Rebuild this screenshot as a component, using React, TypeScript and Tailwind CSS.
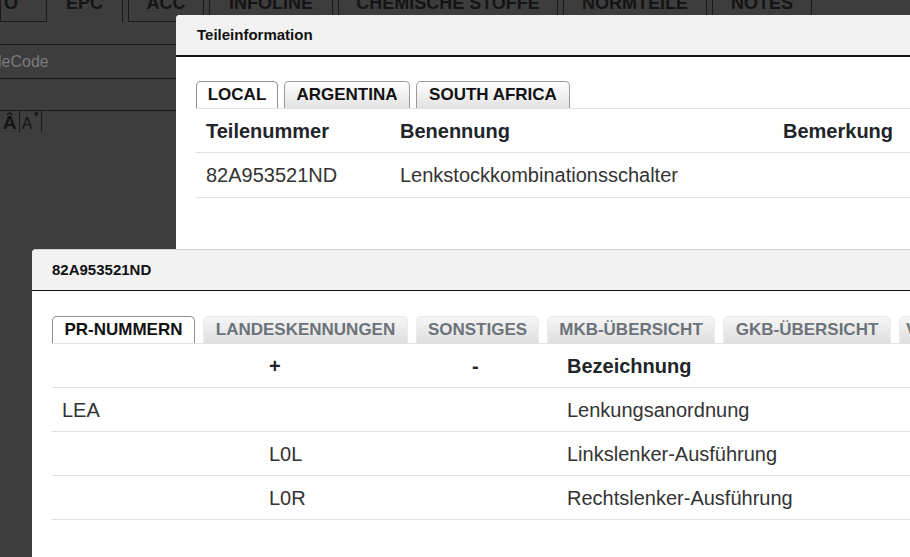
const appTabs = [
  { label: "O", width: "w-[46px] mr-0 border-r-0", align: "justify-end pr-[28px]", active: false },
  { label: "EPC", width: "w-[77px] mr-[5px]", align: "justify-center", active: true },
  { label: "ACC", width: "w-[76px] mr-[5px]", align: "justify-center", active: false },
  { label: "INFOLINE", width: "w-[124px] mr-[5px]", align: "justify-center", active: false },
  { label: "CHEMISCHE STOFFE", width: "w-[220px] mr-[5px]", align: "justify-center", active: false },
  { label: "NORMTEILE", width: "w-[144px] mr-[5px]", align: "justify-center", active: false },
  { label: "NOTES", width: "w-[100px] mr-[5px]", align: "justify-center", active: false },
];

const marketTabs = [
  { label: "LOCAL", width: "w-[82px] justify-center", active: true },
  { label: "ARGENTINA", width: "w-[126px] justify-center", active: false },
  { label: "SOUTH AFRICA", width: "w-[154px] justify-center", active: false },
];

const detailTabs = [
  { label: "PR-NUMMERN", width: "w-[143px] justify-center", active: true },
  { label: "LANDESKENNUNGEN", width: "w-[205px] justify-center", active: false },
  { label: "SONSTIGES", width: "w-[123px] justify-center", active: false },
  { label: "MKB-ÜBERSICHT", width: "w-[168px] justify-center", active: false },
  { label: "GKB-ÜBERSICHT", width: "w-[168px] justify-center", active: false },
  { label: "VERWENDUNG", width: "w-[160px] justify-start pl-[6px]", active: false },
];

const prRows = [
  { id: "lea", family: "LEA", plus: "", minus: "", name: "Lenkungsanordnung" },
  { id: "l0l", family: "", plus: "L0L", minus: "", name: "Linkslenker-Ausführung" },
  { id: "l0r", family: "", plus: "L0R", minus: "", name: "Rechtslenker-Ausführung" },
];

function AppTabBar() {
  return (
    <div className="flex h-[22px]">
      {appTabs.map((tab) => (
        <div
          key={tab.label}
          className={`flex h-[22px] shrink-0 items-start border-x border-[#1b1b1b] text-[18px] font-bold leading-none text-[#141414] ${tab.width} ${tab.align} ${tab.active ? "" : "border-b"}`}
        >
          <span className="-mt-[6px] whitespace-nowrap">{tab.label}</span>
        </div>
      ))}
    </div>
  );
}

function SidePane() {
  return (
    <div className="w-[176px]">
      <div className="h-[23px] border-b border-[#1b1b1b]"></div>
      <div className="flex h-[34px] items-center border-b border-[#1b1b1b] text-[16px] text-[#7a7a7a]">
        <span className="-ml-[2px]">leCode</span>
      </div>
      <div className="h-[32px] border-b border-[#1b1b1b]"></div>
      <div className="flex h-[21px] items-stretch text-[#151515]">
        <div className="flex w-[20px] items-end justify-center border-r border-[#1b1b1b] text-[19px] font-bold leading-none">
          Â
        </div>
        <div className="flex w-[22px] items-end justify-center border-r border-[#1b1b1b] pl-[1px] text-[16px] leading-none">
          A<span className="self-start text-[8px]">▼</span>
        </div>
      </div>
    </div>
  );
}

function PanelTabs({
  tabs,
  gap,
  muted,
}: {
  tabs: { label: string; width: string; active: boolean }[];
  gap: string;
  muted: boolean;
}) {
  return (
    <div className={`flex h-[28px] items-end border-b border-[#dee2e6] ${gap}`}>
      {tabs.map((tab) => {
        const look = tab.active
          ? "border border-b-0 border-[#8e8e8e] bg-white text-[#111]"
          : muted
            ? "border border-b-0 border-[#ececec] bg-linear-to-b from-[#f6f6f6] to-[#dedede] text-[#6c737a]"
            : "border border-b-0 border-[#9a9a9a] bg-linear-to-b from-white to-[#e2e2e2] text-[#111]";
        return (
          <div
            key={tab.label}
            className={`flex h-[27px] shrink-0 items-center rounded-t-[5px] text-[17px] font-bold ${tab.width} ${look}`}
          >
            <span className="whitespace-nowrap">{tab.label}</span>
          </div>
        );
      })}
    </div>
  );
}

function TeileinformationDialog() {
  return (
    <section className="absolute left-[176px] top-[15px] h-[600px] w-[800px] overflow-hidden rounded-tl-[4px] bg-white">
      <header className="flex h-[42px] items-center border-b-2 border-[#111] bg-[#f2f2f2] pl-[21px] text-[15px] font-bold text-[#111]">
        Teileinformation
      </header>
      <div className="pl-[20px] pt-[24px]">
        <PanelTabs tabs={marketTabs} gap="gap-[6px]" muted={false} />
        <div className="grid h-[44px] grid-cols-[194px_383px_1fr] border-b border-[#dee2e6] text-[20px] font-bold text-[#212529]">
          <div className="flex items-center px-[10px]">Teilenummer</div>
          <div className="flex items-center px-[10px]">Benennung</div>
          <div className="flex items-center px-[10px]">Bemerkung</div>
        </div>
        <div className="grid h-[45px] grid-cols-[194px_383px_1fr] border-b border-[#dee2e6] text-[20px] text-[#333]">
          <div className="flex items-center px-[10px]">82A953521ND</div>
          <div className="flex items-center px-[10px]">Lenkstockkombinationsschalter</div>
          <div className="flex items-center px-[10px]"></div>
        </div>
      </div>
    </section>
  );
}

function PrNummernDialog() {
  return (
    <section className="absolute left-[32px] top-[249px] h-[340px] w-[920px] overflow-hidden rounded-tl-[4px] border-t border-[#cfcfd6] bg-white">
      <header className="flex h-[41px] items-center border-b border-[#111] bg-[#f2f2f2] pl-[20px] text-[15px] font-bold text-[#111]">
        82A953521ND
      </header>
      <div className="pl-[20px] pt-[25px]">
        <PanelTabs tabs={detailTabs} gap="gap-[8px]" muted={true} />
        <div className="grid h-[44px] grid-cols-[207px_203px_95px_1fr] border-b border-[#dee2e6] text-[20px] font-bold text-[#212529]">
          <div className="flex items-center px-[10px]"></div>
          <div className="flex items-center px-[10px]">+</div>
          <div className="flex items-center px-[10px]">-</div>
          <div className="flex items-center px-[10px]">Bezeichnung</div>
        </div>
        {prRows.map((row) => (
          <div
            key={row.id}
            className="grid h-[44px] grid-cols-[207px_203px_95px_1fr] border-b border-[#dee2e6] text-[20px] text-[#333]"
          >
            <div className="flex items-center px-[10px]">{row.family}</div>
            <div className="flex items-center px-[10px]">{row.plus}</div>
            <div className="flex items-center px-[10px]">{row.minus}</div>
            <div className="flex items-center px-[10px]">{row.name}</div>
          </div>
        ))}
      </div>
    </section>
  );
}

export default function App() {
  return (
    <div className="relative h-[557px] w-[910px] overflow-hidden bg-[#3d3d3d] font-['Liberation_Sans',Arial,sans-serif]">
      <AppTabBar />
      <SidePane />
      <TeileinformationDialog />
      <PrNummernDialog />
    </div>
  );
}
